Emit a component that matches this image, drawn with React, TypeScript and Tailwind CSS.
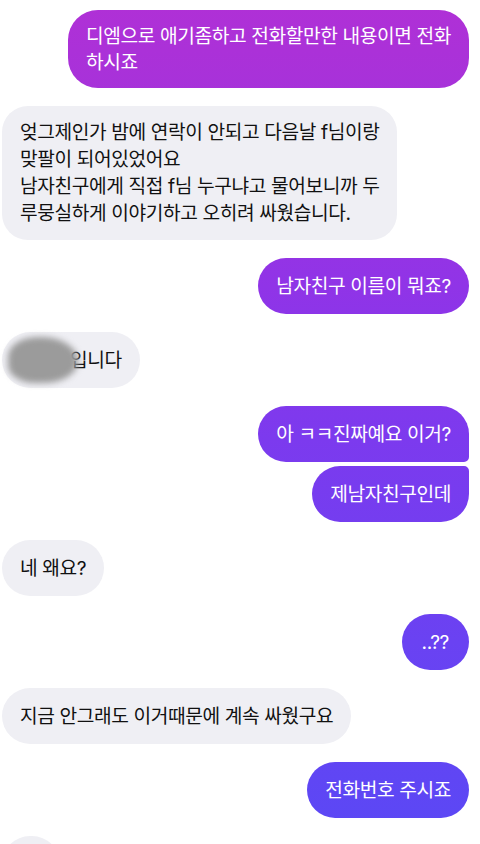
const sent =
  "bg-fixed bg-[linear-gradient(180deg,#b030d6_0%,#a632da_12%,#9034e7_34%,#7c3aee_52%,#6a42f2_76%,#5a48f5_100%)] text-white";
const recv = "bg-[#efeff4] text-[#111]";

function Bubble({
  side,
  className = "",
  children,
}: {
  side: "me" | "them";
  className?: string;
  children?: React.ReactNode;
}) {
  return (
    <div
      className={`${side === "me" ? `self-end ${sent}` : `self-start ${recv}`} whitespace-nowrap px-[18px] text-[19.2px] leading-[26px] tracking-[-0.4px] ${className}`}
    >
      {children}
    </div>
  );
}

export default function App() {
  return (
    <div className="h-[844px] w-full overflow-hidden bg-white font-[family-name:Inter,Noto_Sans_CJK_KR,sans-serif]">
      <div className="flex flex-col gap-[18px] pl-[2px] pr-[11px] pt-[10px]">
        <Bubble side="me" className="rounded-[30px] py-[13px]">
          디엠으로 애기좀하고 전화할만한 내용이면 전화
          <br />
          하시죠
        </Bubble>

        <Bubble side="them" className="rounded-[26px] py-[13px] leading-[27px]">
          엊그제인가 밤에 연락이 안되고 다음날 f님이랑
          <br />
          맞팔이 되어있었어요
          <br />
          남자친구에게 직접 f님 누구냐고 물어보니까 두
          <br />
          루뭉실하게 이야기하고 오히려 싸웠습니다.
        </Bubble>

        <Bubble side="me" className="rounded-[28px] py-[15px]">
          남자친구 이름이 뭐죠?
        </Bubble>

        <Bubble side="them" className="relative rounded-[28px] py-[15px]">
          <span className="inline-block w-[50px]" />
          입니다
          {/* blurred name */}
          <span className="absolute left-[6px] top-[5px] h-[46px] w-[70px] rounded-[45%_55%_50%_40%] bg-[#9b9b9b] blur-[3px]" />
        </Bubble>

        <div className="flex flex-col items-end gap-[4px]">
          <Bubble side="me" className="rounded-[28px] rounded-br-[5px] py-[15px]">
            아 ㅋㅋ진짜예요 이거?
          </Bubble>
          <Bubble side="me" className="rounded-[28px] rounded-tr-[5px] py-[15px]">
            제남자친구인데
          </Bubble>
        </div>

        <Bubble side="them" className="rounded-[28px] py-[15px]">
          네 왜요?
        </Bubble>

        <Bubble side="me" className="rounded-[28px] px-[20px] py-[15px]">
          ..??
        </Bubble>

        <Bubble side="them" className="rounded-[28px] py-[15px]">
          지금 안그래도 이거때문에 계속 싸웠구요
        </Bubble>

        <Bubble side="me" className="rounded-[28px] py-[15px]">
          전화번호 주시죠
        </Bubble>

        {/* next message, cut off by the screen edge */}
        <Bubble side="them" className="h-[56px] w-[58px] rounded-[28px]" />
      </div>
    </div>
  );
}
